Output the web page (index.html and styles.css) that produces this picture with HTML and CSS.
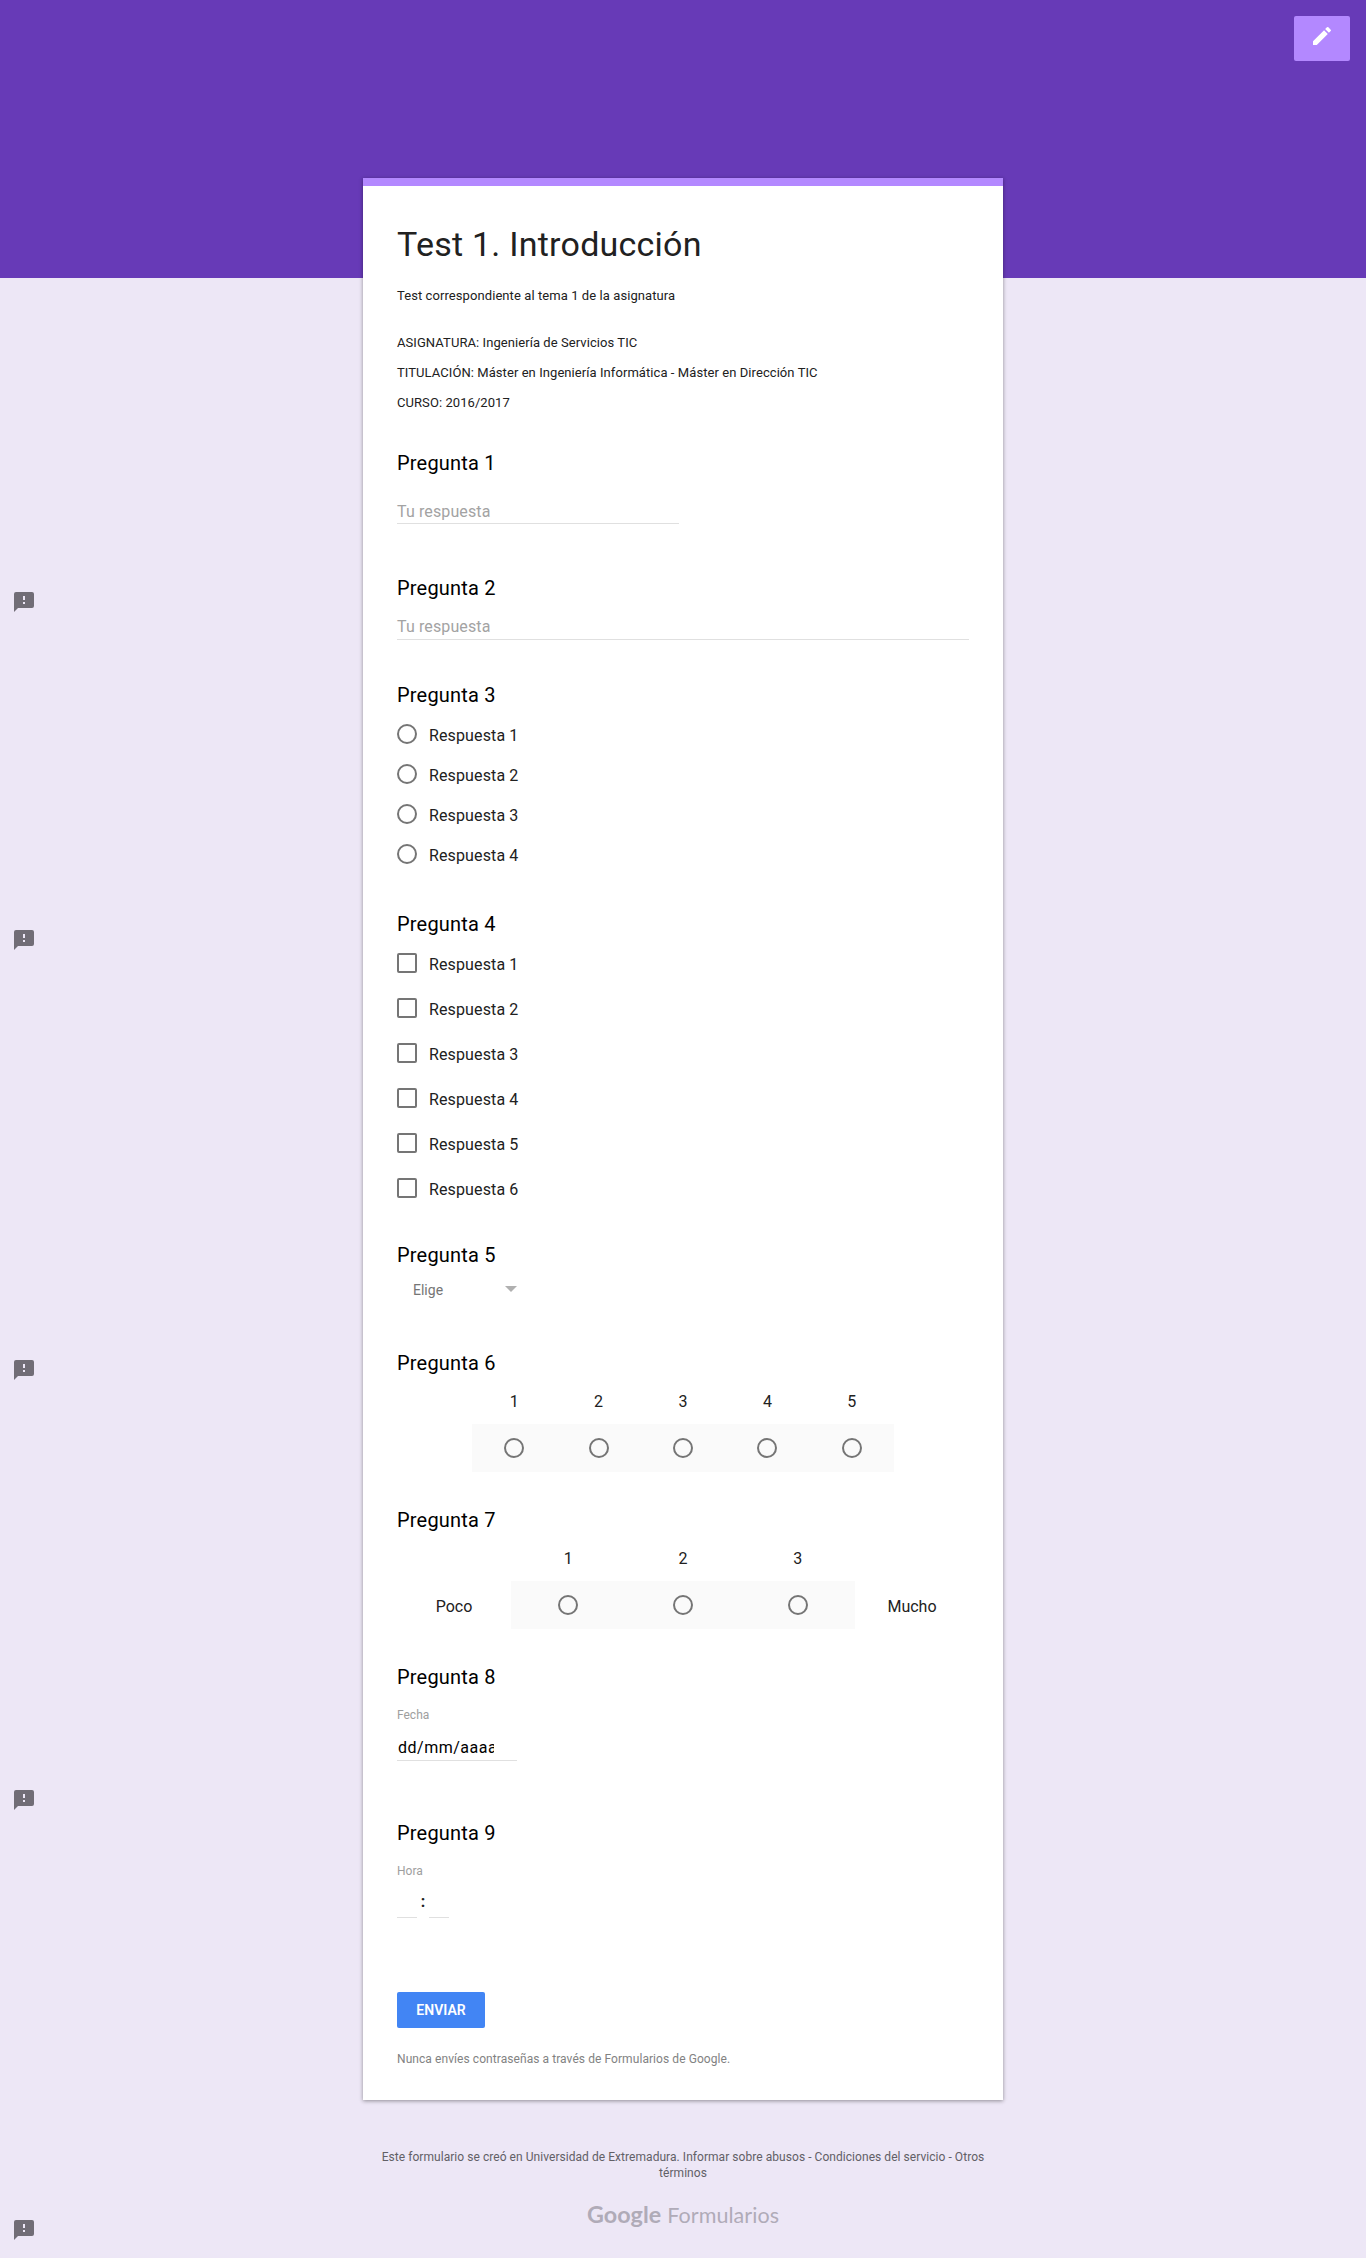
FILE: index.html
```html
<!DOCTYPE html>
<html lang="es">
<head>
<meta charset="utf-8">
<title>Test 1. Introducción</title>
<link rel="stylesheet" href="styles.css">
</head>
<body>
<svg class="defs" aria-hidden="true"><symbol id="report" viewBox="0 0 20 20"><path fill-rule="evenodd" d="M2 0h16a2 2 0 0 1 2 2v12a2 2 0 0 1-2 2H4l-4 4V2a2 2 0 0 1 2-2zM9 4v4h2V4zM9 10v2h2v-2z"/></symbol></svg>
<svg class="report report-1"><use href="#report"/></svg>
<svg class="report report-2"><use href="#report"/></svg>
<svg class="report report-3"><use href="#report"/></svg>
<svg class="report report-4"><use href="#report"/></svg>
<svg class="report report-5"><use href="#report"/></svg>
<header class="banner">
<button class="edit" aria-label="Editar"><svg width="24" height="24" viewBox="0 0 24 24"><path fill="#fff" d="M3 17.25V21h3.75L17.81 9.94l-3.75-3.75L3 17.25zM20.71 7.04a1 1 0 0 0 0-1.41l-2.34-2.34a1 1 0 0 0-1.41 0l-1.83 1.83 3.75 3.75 1.83-1.83z"/></svg></button>
</header>
<main class="card">
<h1 class="title">Test 1. Introducción</h1>
<p class="lead">Test correspondiente al tema 1 de la asignatura</p>
<div class="info"><p>ASIGNATURA: Ingeniería de Servicios TIC</p><p>TITULACIÓN: Máster en Ingeniería Informática - Máster en Dirección TIC</p><p>CURSO: 2016/2017</p></div>
<section class="question q1"><h2>Pregunta 1</h2><div class="field short">Tu respuesta</div></section>
<section class="question q2"><h2>Pregunta 2</h2><div class="field">Tu respuesta</div></section>
<section class="question q3"><h2>Pregunta 3</h2>
<div class="options radios">
<label><i class="radio"></i><span>Respuesta 1</span></label>
<label><i class="radio"></i><span>Respuesta 2</span></label>
<label><i class="radio"></i><span>Respuesta 3</span></label>
<label><i class="radio"></i><span>Respuesta 4</span></label>
</div></section>
<section class="question q4"><h2>Pregunta 4</h2>
<div class="options checks">
<label><i class="check"></i><span>Respuesta 1</span></label>
<label><i class="check"></i><span>Respuesta 2</span></label>
<label><i class="check"></i><span>Respuesta 3</span></label>
<label><i class="check"></i><span>Respuesta 4</span></label>
<label><i class="check"></i><span>Respuesta 5</span></label>
<label><i class="check"></i><span>Respuesta 6</span></label>
</div></section>
<section class="question q5"><h2>Pregunta 5</h2><div class="select"><span>Elige</span><i class="arrow"></i></div></section>
<section class="question q6"><h2>Pregunta 6</h2>
<div class="scale five">
<div class="numbers"><span>1</span><span>2</span><span>3</span><span>4</span><span>5</span></div>
<div class="end"></div>
<div class="band"><i class="radio"></i><i class="radio"></i><i class="radio"></i><i class="radio"></i><i class="radio"></i></div>
<div class="end"></div>
</div></section>
<section class="question q7"><h2>Pregunta 7</h2>
<div class="scale three">
<div class="numbers"><span>1</span><span>2</span><span>3</span></div>
<div class="end">Poco</div>
<div class="band"><i class="radio"></i><i class="radio"></i><i class="radio"></i></div>
<div class="end">Mucho</div>
</div></section>
<section class="question q8"><h2>Pregunta 8</h2><div class="caption">Fecha</div><div class="date"><span>dd/mm/aaaa</span></div></section>
<section class="question q9"><h2>Pregunta 9</h2><div class="caption">Hora</div><div class="time"><i></i><b>:</b><i></i></div></section>
<button class="submit">ENVIAR</button>
<p class="warning">Nunca envíes contraseñas a través de Formularios de Google.</p>
</main>
<footer class="footer">
<p>Este formulario se creó en Universidad de Extremadura. Informar sobre abusos - Condiciones del servicio - Otros términos</p>
<div class="brand"><span class="google">Google</span><span class="forms">Formularios</span></div>
</footer>
</body>
</html>
```
FILE: styles.css
```css
* { box-sizing: border-box; }
body { margin: 0; height: 2258px; position: relative; overflow: hidden; background: #ede7f6; font-family: Roboto, sans-serif; color: #212121; }
h1, h2, p { margin: 0; font-weight: 400; }
.defs { position: absolute; width: 0; height: 0; }
.report { position: absolute; left: 14px; width: 20px; height: 20px; fill: #716d76; }
.report-1 { top: 592px; }
.report-2 { top: 930px; }
.report-3 { top: 1360px; }
.report-4 { top: 1790px; }
.report-5 { top: 2220px; }
.banner { height: 278px; padding: 16px; background: #673ab7; display: flex; justify-content: flex-end; align-items: flex-start; }
.edit { width: 56px; height: 45px; padding: 8px 0 0; border: 0; border-radius: 2px; background: #b388ff; display: flex; justify-content: center; align-items: flex-start; }
.card { position: relative; width: 640px; height: 1922px; margin: -100px auto 0; padding: 38px 34px 0; border-top: 8px solid #b388ff; background: #fff; box-shadow: 0 1px 4px rgba(0,0,0,.4); }
.title { font-size: 34px; line-height: 40px; letter-spacing: .24px; }
.lead { margin-top: 22px; font-size: 13px; line-height: 20px; letter-spacing: .08px; }
.info { margin-top: 22px; font-size: 13px; line-height: 30px; letter-spacing: .07px; }
.question { display: flex; flex-direction: column; }
.question h2 { font-size: 20px; line-height: 24px; letter-spacing: .2px; color: #000; }
.q1 { margin-top: 33px; height: 125px; }
.q2 { height: 107px; }
.q3 { height: 229px; }
.q4 { height: 331px; }
.q5 { height: 108px; }
.q6 { height: 157px; }
.q7 { height: 157px; }
.q8 { height: 156px; }
.q9 { height: 171px; }
.field { height: 25px; margin-top: 15px; border-bottom: 1px solid #e0e0e0; font-size: 16px; line-height: 24px; letter-spacing: .12px; color: #a3a3a3; }
.short { width: 282px; margin-top: 24px; line-height: 26px; }
.options { display: flex; flex-direction: column; margin-top: 17px; }
.radios { gap: 20px; }
.checks { gap: 25px; }
.options label { height: 20px; display: flex; gap: 12px; font-size: 16px; line-height: 23px; letter-spacing: .13px; }
.radio, .check { flex: none; display: block; width: 20px; height: 20px; border: 2px solid #757575; }
.radio { border-radius: 50%; }
.check { border-radius: 2px; }
.select { width: 125px; padding: 13px 5px 0 16px; display: flex; justify-content: space-between; font-size: 14px; line-height: 20px; color: #757575; }
.arrow { width: 0; height: 0; margin-top: 6px; border: 6px solid transparent; border-top-color: #b0b0b0; border-bottom: 0; }
.scale { display: grid; font-size: 16px; }
.five { grid-template-columns: 1fr 422px 1fr; }
.three { grid-template-columns: 1fr 344px 1fr; }
.numbers { grid-column: 2; height: 49px; padding-top: 15px; display: flex; line-height: 24px; }
.numbers span { flex: 1; text-align: center; }
.end { grid-row: 2; height: 48px; line-height: 51px; text-align: center; }
.band { grid-row: 2; grid-column: 2; height: 48px; background: #fafafa; display: flex; justify-content: space-around; align-items: center; }
.caption { margin-top: 17px; font-size: 12px; line-height: 18px; color: #9e9e9e; }
.date { width: 120px; height: 32px; margin-top: 5px; padding: 8px 0 0 1px; border-bottom: 1px solid #e0e0e0; font-size: 16px; line-height: 22px; color: #000; }
.date span { display: block; width: 96px; overflow: hidden; white-space: nowrap; letter-spacing: .5px; }
.time { display: flex; margin-top: 5px; height: 33px; font-size: 16px; line-height: 33px; }
.time i { width: 20px; border-bottom: 1px solid #e0e0e0; }
.time b { width: 12px; text-align: center; font-weight: 700; }
.submit { display: block; width: 88px; height: 36px; padding: 0; border: 0; border-radius: 2px; background: #4285f4; color: #fff; font: 600 14px/36px Roboto, sans-serif; }
.warning { margin-top: 22px; font-size: 12px; line-height: 18px; letter-spacing: .07px; color: #828282; }
.footer { width: 640px; margin: 49px auto 0; text-align: center; font-size: 12px; line-height: 16px; letter-spacing: .05px; color: #626066; }
.footer p { padding: 0 16px; }
.brand { display: flex; justify-content: center; align-items: baseline; gap: 6px; margin-top: 18px; font: 23.3px/30px Lato, sans-serif; color: #b0abb8; }
.google { font-weight: 700; }
.forms { font-size: 21.5px; }
```
